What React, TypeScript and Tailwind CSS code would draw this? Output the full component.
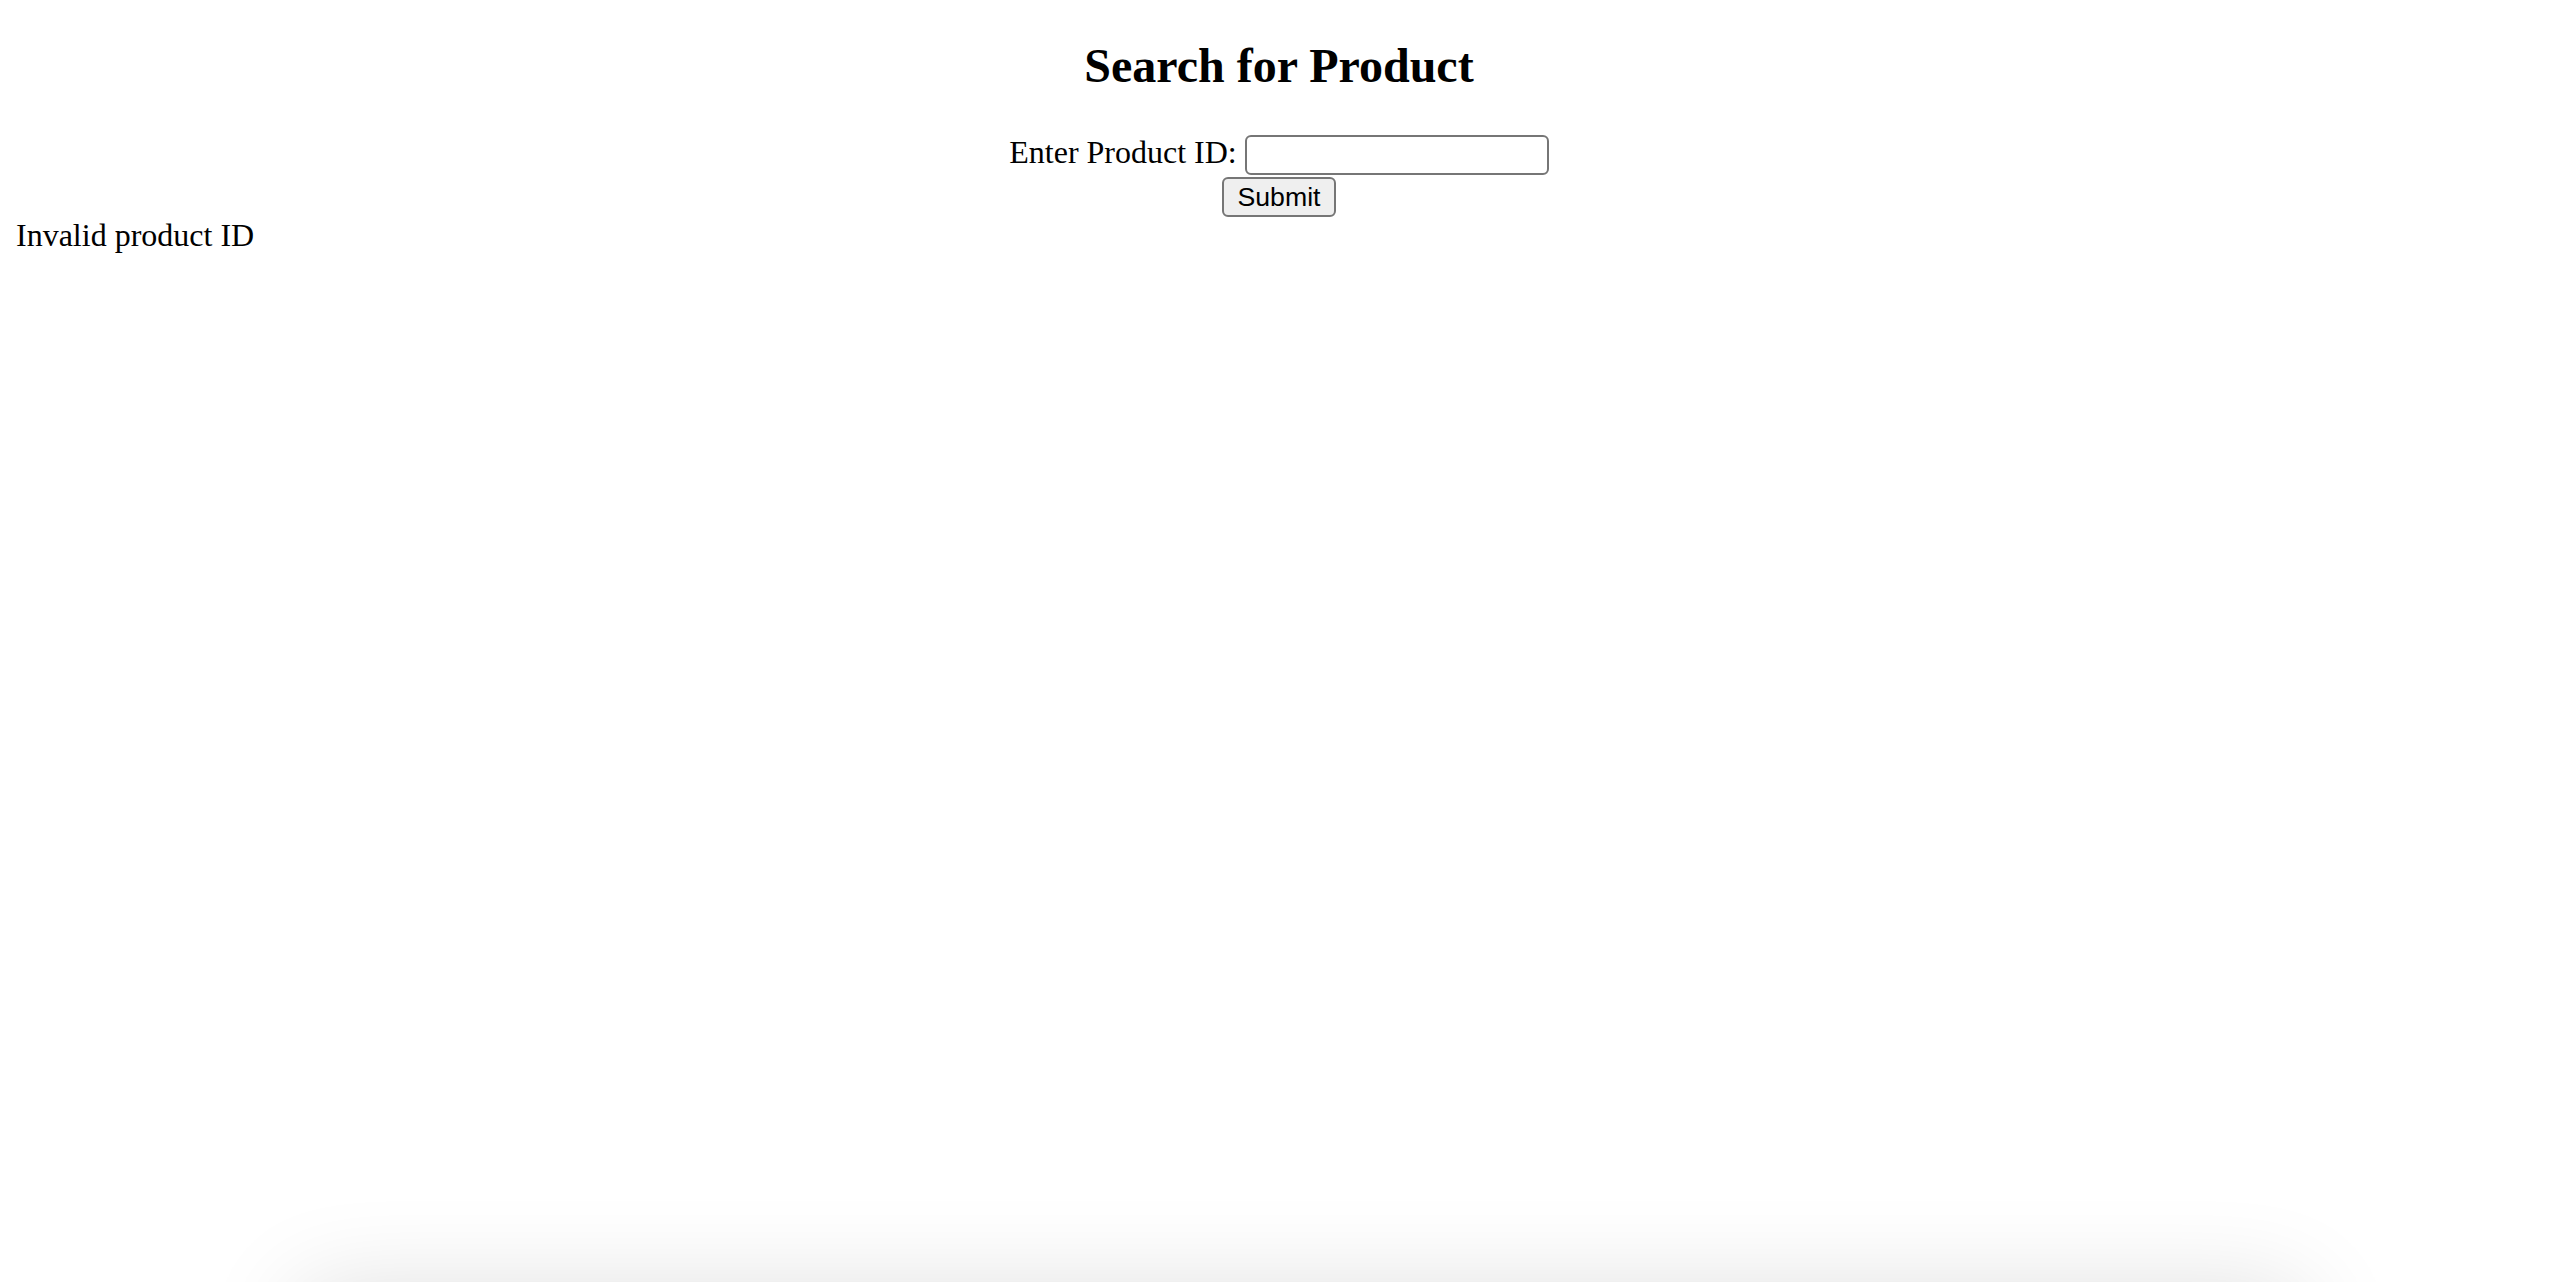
export default function App() {
  return (
    <div className="min-h-screen bg-white text-black px-[16px] font-['Liberation_Serif','Times_New_Roman',serif]">
      <div className="text-center">
        <h2 className="pt-[38px] mb-[42px] pl-[6px] text-[48px] leading-[55px] font-bold">Search for Product</h2>
        <form className="flex flex-col items-center pl-[6px]" onSubmit={(e) => e.preventDefault()}>
          <div className="flex items-center h-[40px]">
            <label htmlFor="pid" className="text-[32px] leading-[37px] mr-[8px] mb-[6px]">Enter Product ID:</label>
            <input
              id="pid"
              type="text"
              className="w-[304px] h-[40px] border-2 border-[#767676] rounded-[6px] bg-white px-[4px] text-[26px] outline-none"
            />
          </div>
          <button
            type="submit"
            className="mt-[2px] w-[114px] h-[40px] border-2 border-[#767676] rounded-[6px] bg-[#efefef] text-[26.67px] leading-none font-['Liberation_Sans',Arial,sans-serif]"
          >
            Submit
          </button>
        </form>
      </div>
      <div className="mt-[3px] text-[32px] leading-[30px]">Invalid product ID</div>

      {/* faint shadow of a panel sitting just below the viewport */}
      <div className="pointer-events-none fixed left-[300px] right-[250px] top-[1292px] h-[120px] bg-white shadow-[0_0_100px_rgba(0,0,0,0.14)]" />
    </div>
  )
}
